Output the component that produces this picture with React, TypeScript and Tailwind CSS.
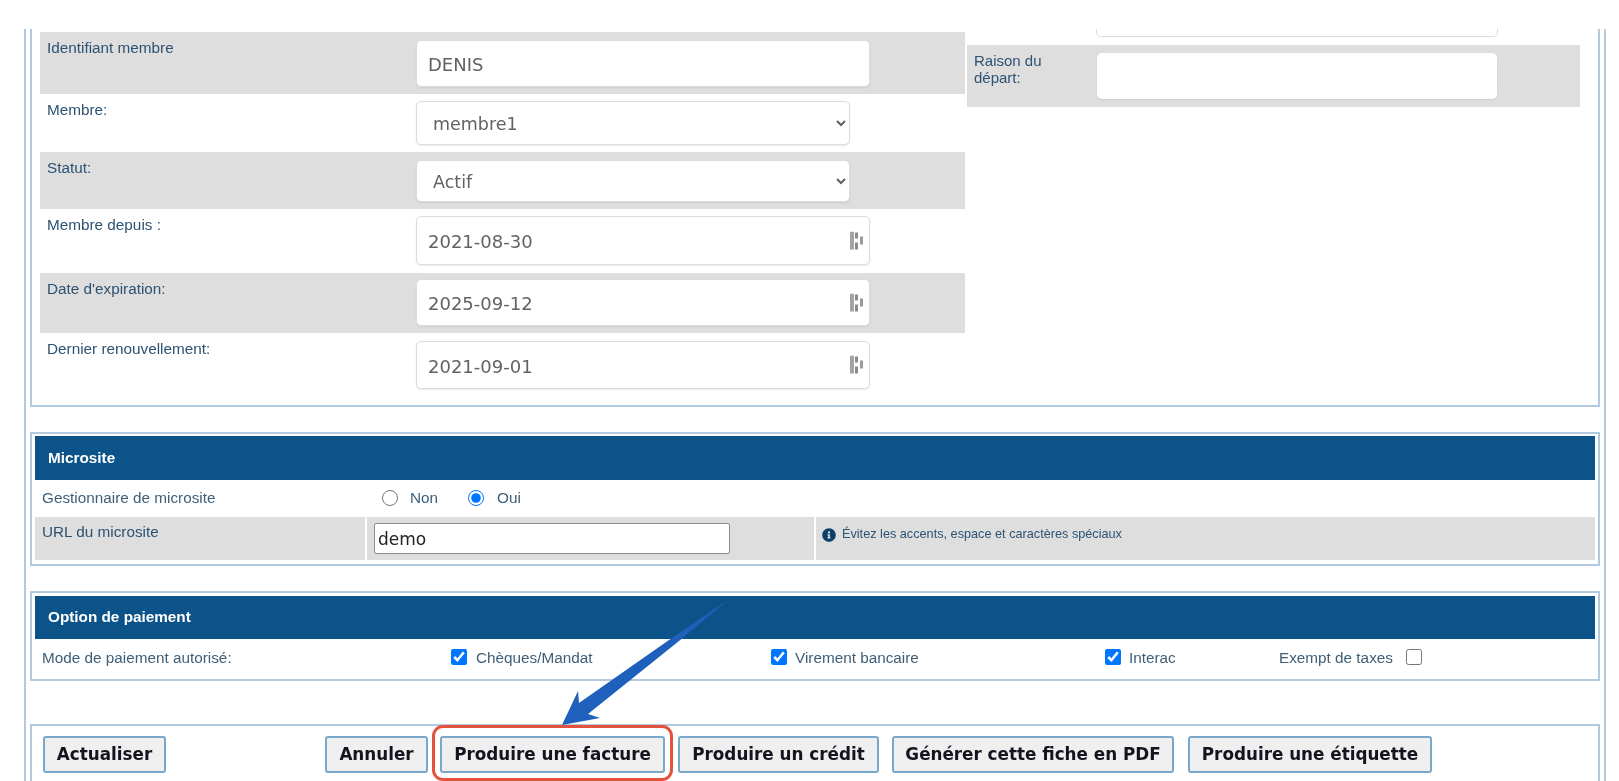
import type { FC, ReactNode } from 'react';
import { FaInfoCircle } from 'react-icons/fa';

const sans = "font-['Liberation_Sans',Arial,sans-serif]";
const inputFont = "font-['DejaVu_Sans',Verdana,sans-serif]";

const DateGlyph: FC = () => (
  <svg width="15" height="19" viewBox="0 0 15 19" className="absolute right-[5px] top-1/2 -translate-y-1/2">
    <rect x="0" y="0" width="4" height="18" fill="#a3a3a3" />
    <rect x="5" y="1" width="3" height="6" fill="#8a8a8a" />
    <rect x="5" y="11" width="3" height="7" fill="#8a8a8a" />
    <rect x="10" y="5" width="3" height="8" fill="#9a9a9a" />
  </svg>
);

const Row: FC<{ label: string; gray?: boolean; height: string; children: ReactNode }> = ({ label, gray, height, children }) => (
  <div className={`flex ${height} ${gray ? 'bg-[#dedede]' : 'bg-white'}`}>
    <div className={`w-[369px] shrink-0 pl-[7px] pt-[8px] text-[15.3px] leading-[16px] text-[#2d5272] ${sans}`}>{label}</div>
    <div className={`ml-[2px] flex-1 pl-[5px] ${gray ? 'bg-[#dedede]' : ''}`}>{children}</div>
  </div>
);

const boxClass = `block rounded-[5px] border border-[#dcdcdc] bg-white pt-[2px] text-[#626262] shadow-[0_1px_2px_rgba(0,0,0,0.08)] outline-none ${inputFont}`;

const TextBox: FC<{ value: string; className: string; date?: boolean }> = ({ value, className, date }) => (
  <div className={`relative ${className}`}>
    <input readOnly value={value} className={`${boxClass} h-full w-full pl-[11px] text-[18px]`} />
    {date && <DateGlyph />}
  </div>
);

const SelectBox: FC<{ value: string; className: string }> = ({ value, className }) => (
  <select defaultValue={value} className={`${boxClass} w-[434px] pl-[12px] text-[17.5px] ${className}`}>
    <option>{value}</option>
  </select>
);

const Header: FC<{ title: string; height: string }> = ({ title, height }) => (
  <div className={`flex ${height} items-center bg-[#0c5389] pl-[13px] text-[15.3px] font-bold text-white ${sans}`}>{title}</div>
);

const Btn: FC<{ label: string; className: string }> = ({ label, className }) => (
  <button className={`h-[37px] shrink-0 rounded-[3px] border-2 border-[#7aa8ca] bg-[#efefef] text-[16.8px] font-bold text-[#14141f] ${inputFont} ${className}`}>
    {label}
  </button>
);

export default function App() {
  return (
    <div className="relative h-[781px] w-[1619px] overflow-hidden bg-white pt-[29px] blur-[0.4px]">
      <div className="ml-[24px] h-[752px] w-[1582px] border-x-2 border-[#b3c9e0] pl-[4px] pr-[4px]">
        {/* Fiche membre */}
        <div className="flex h-[378px] border-x-2 border-b-2 border-[#b3c9e0] pl-[8px] pt-[3px]">
          <div className="w-[925px] shrink-0">
            <Row label="Identifiant membre" gray height="h-[62px]">
              <TextBox value="DENIS" className="mt-[8px] h-[47px] w-[454px]" />
            </Row>
            <Row label="Membre:" height="h-[58px]">
              <SelectBox value="membre1" className="mt-[7px] h-[44px]" />
            </Row>
            <Row label="Statut:" gray height="h-[57px]">
              <SelectBox value="Actif" className="mt-[8px] h-[42px]" />
            </Row>
            <Row label="Membre depuis :" height="h-[64px]">
              <TextBox value="2021-08-30" date className="mt-[7px] h-[49px] w-[454px]" />
            </Row>
            <Row label="Date d'expiration:" gray height="h-[60px]">
              <TextBox value="2025-09-12" date className="mt-[6px] h-[47px] w-[454px]" />
            </Row>
            <Row label="Dernier renouvellement:" height="h-[59px]">
              <TextBox value="2021-09-01" date className="mt-[8px] h-[48px] w-[454px]" />
            </Row>
          </div>
          <div className="ml-[2px] w-[613px]">
            <div className="-mt-[3px] ml-[129px] h-[8px] w-[402px] rounded-b-[5px] border-x border-b border-[#dcdcdc]" />
            <div className="mt-[8px] flex h-[62px] bg-[#dedede]">
              <div className={`w-[121px] pl-[7px] pr-[30px] pt-[7px] text-[15px] leading-[17px] text-[#2d5272] ${sans}`}>Raison du départ:</div>
              <div className="ml-[1px] flex-1 pl-[8px] pt-[8px]">
                <div className="h-[46px] w-[400px] rounded-[5px] bg-white shadow-[0_1px_2px_rgba(0,0,0,0.08)]" />
              </div>
            </div>
          </div>
        </div>

        {/* Microsite */}
        <div className="mt-[25px] h-[134px] border-2 border-[#b3c9e0] px-[3px] pt-[2px]">
          <Header title="Microsite" height="h-[44px]" />
          <div className={`flex h-[37px] text-[15.3px] text-[#3f5f78] ${sans}`}>
            <div className="w-[330px] pl-[7px] pt-[7px]">Gestionnaire de microsite</div>
            <label className="mt-[10px] flex h-[16px] items-center">
              <input type="radio" name="ms" className="ml-[17px] h-4 w-4" />
              <span className="ml-[12px]">Non</span>
            </label>
            <label className="mt-[10px] flex h-[16px] items-center">
              <input type="radio" name="ms" defaultChecked className="ml-[30px] h-4 w-4" />
              <span className="ml-[13px]">Oui</span>
            </label>
          </div>
          <div className="flex h-[43px] bg-[#dedede]">
            <div className={`w-[330px] pl-[7px] pt-[7px] text-[15.3px] leading-[16px] text-[#2d5272] ${sans}`}>URL du microsite</div>
            <div className="w-[449px] border-l-2 border-white pl-[7px] pt-[6px]">
              <input readOnly value="demo" className={`h-[31px] w-[356px] rounded-[2px] border border-[#8a8a8a] bg-white pl-[3px] text-[17px] text-[#222] ${inputFont}`} />
            </div>
            <div className={`flex border-l-2 border-white pl-[6px] pt-[10px] text-[12.7px] leading-[14px] text-[#2d5272] ${sans}`}>
              <FaInfoCircle className="mt-[1px] h-[14px] w-[14px] text-[#0c3f6b]" />
              <span className="ml-[6px]">Évitez les accents, espace et caractères spéciaux</span>
            </div>
          </div>
        </div>

        {/* Option de paiement */}
        <div className="mt-[25px] h-[90px] border-2 border-[#b3c9e0] px-[3px] pt-[3px]">
          <Header title="Option de paiement" height="h-[43px]" />
          <div className={`flex h-[41px] items-start pt-[8px] text-[15.3px] text-[#3f5f78] ${sans}`}>
            <div className="w-[416px] pl-[7px]">Mode de paiement autorisé:</div>
            <input type="checkbox" readOnly checked className="mt-[2px] h-4 w-4" />
            <span className="ml-[9px] w-[295px]">Chèques/Mandat</span>
            <input type="checkbox" readOnly checked className="mt-[2px] h-4 w-4" />
            <span className="ml-[8px] w-[310px]">Virement bancaire</span>
            <input type="checkbox" readOnly checked className="mt-[2px] h-4 w-4" />
            <span className="ml-[8px] w-[150px]">Interac</span>
            <span className="w-[127px]">Exempt de taxes</span>
            <input type="checkbox" readOnly className="mt-[2px] h-4 w-4" />
          </div>
        </div>

        {/* Boutons */}
        <div className="mt-[43px] flex h-[60px] border-x-2 border-t-2 border-[#b3c9e0] pl-[11px] pt-[10px]">
          <Btn label="Actualiser" className="w-[123px]" />
          <Btn label="Annuler" className="ml-[159px] w-[103px]" />
          <Btn label="Produire une facture" className="ml-[12px] w-[225px]" />
          <Btn label="Produire un crédit" className="ml-[13px] w-[201px]" />
          <Btn label="Générer cette fiche en PDF" className="ml-[13px] w-[282px]" />
          <Btn label="Produire une étiquette" className="ml-[14px] w-[244px]" />
        </div>
      </div>

      {/* Annotation: cadre rouge et flèche */}
      <div className="absolute left-[432px] top-[725px] h-[56px] w-[241px] rounded-[11px] border-[3px] border-[#e2523c]" />
      <svg className="absolute left-0 top-0" width="1619" height="781" viewBox="0 0 1619 781" fill="none">
        <path d="M728 600 L669 640 L579 703 L578 691 L562 725 L600 718 L588 714 L679 641 Z" fill="#1f60bd" />
      </svg>
    </div>
  );
}
